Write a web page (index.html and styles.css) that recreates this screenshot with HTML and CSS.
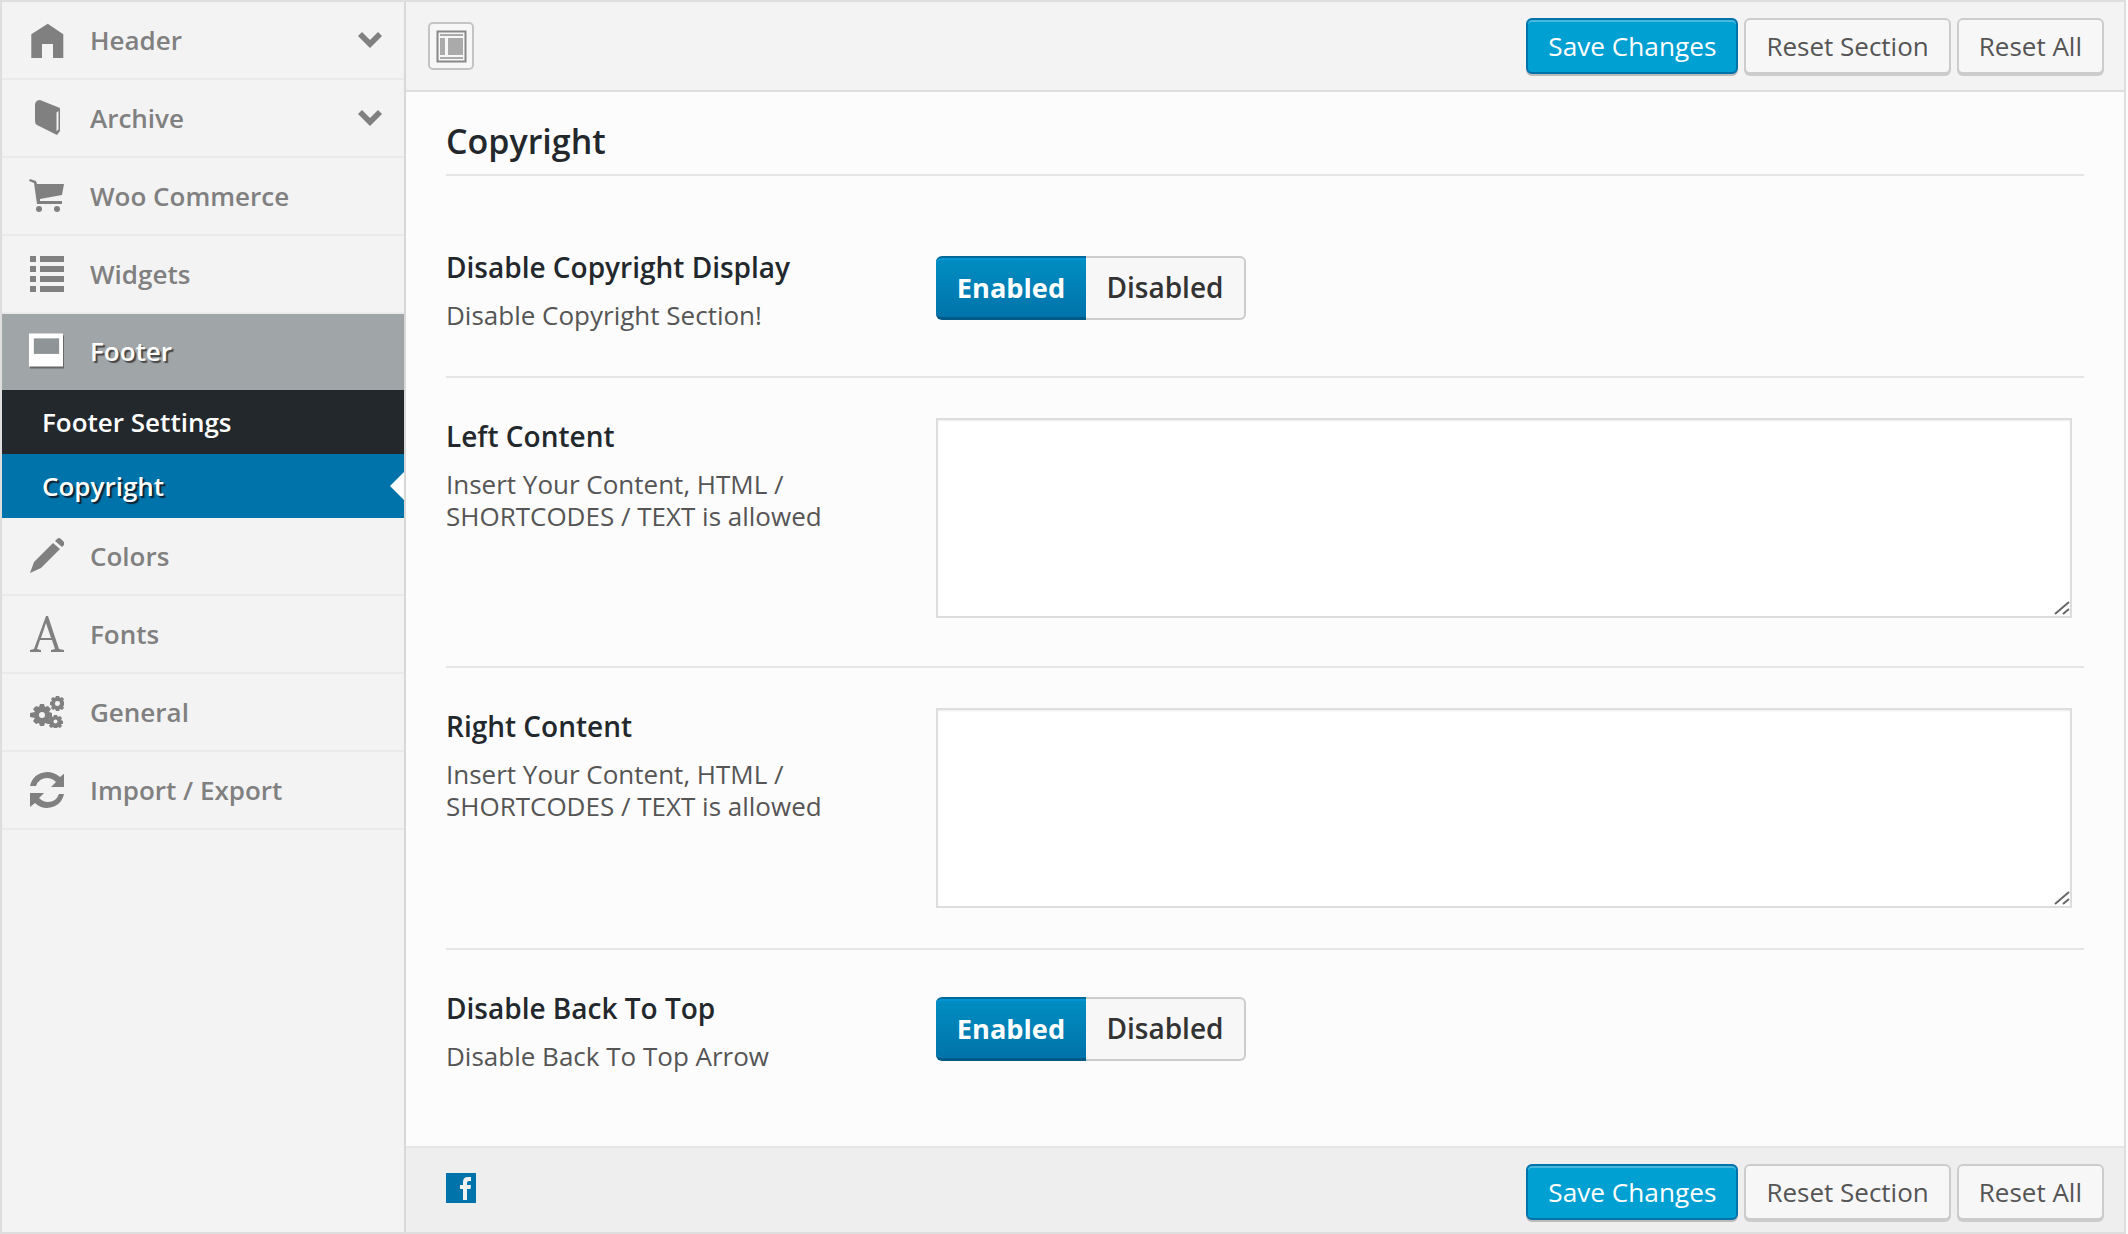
FILE: index.html
```html
<!DOCTYPE html>
<html lang="en">
<head>
  <meta charset="UTF-8">
  <title>Theme Options - Copyright</title>
  <link rel="stylesheet" href="styles.css">
</head>
<body>
  <div class="panel">
    <!-- side menu -->
    <nav class="sidebar">
      <a class="item" href="#">
        <svg class="icon" viewBox="0 0 36 36"><path d="M19.700 1.700 L35.300 12.300 V36 H25 V22 H14 V36 H3.300 V12.300 Z"/></svg>
        <span>Header</span>
        <svg class="chevron" viewBox="0 0 24 16"><path d="M0 4 L4 0 L12 8 L20 0 L24 4 L12 16 Z"/></svg>
      </a>
      <a class="item" href="#">
        <svg class="icon" viewBox="0 0 36 36"><path fill-rule="evenodd" d="M12 0 L32 8 V31 L29 35 L9 25 Q7 24 7 21 V4 Q8 0 12 0 Z M30.500 11 L28.500 12.500 V31 L30.500 29.500 Z"/></svg>
        <span>Archive</span>
        <svg class="chevron" viewBox="0 0 24 16"><path d="M0 4 L4 0 L12 8 L20 0 L24 4 L12 16 Z"/></svg>
      </a>
      <a class="item" href="#">
        <svg class="icon" viewBox="0 0 36 36"><path d="M2 1 L8 3 L9 6 H36 L34 17 L12 21 V23 H34 V26 H9 L6 5 L1 3 Z"/><circle cx="11" cy="31" r="3"/><circle cx="29" cy="31" r="3"/></svg>
        <span>Woo Commerce</span>
      </a>
      <a class="item" href="#">
        <svg class="icon" viewBox="0 0 36 36"><path d="M2 0 H8 V6 H2 Z M12 0 H36 V6 H12 Z M2 10 H8 V16 H2 Z M12 10 H36 V16 H12 Z M2 20 H8 V26 H2 Z M12 20 H36 V26 H12 Z M2 30 H8 V36 H2 Z M12 30 H36 V36 H12 Z"/></svg>
        <span>Widgets</span>
      </a>
      <a class="item item-open" href="#">
        <svg class="icon" viewBox="0 0 37 36"><path class="frame-shadow" d="M2 2 H37 V36 H2 Z"/><path class="frame" d="M1 0 H36 V34 H1 Z"/><path class="frame-hole" d="M6 5 H32 V21 H6 Z"/></svg>
        <span>Footer</span>
      </a>
      <a class="subitem" href="#">Footer Settings</a>
      <a class="subitem subitem-active" href="#">Copyright</a>
      <a class="item" href="#">
        <svg class="icon" viewBox="0 0 36 36"><path d="M29 1 Q31 -1 33 1 L36 4 Q37 6 35 8 L34 9 L27 3 Z M25 5 L32 11 L13 30 L2 35 L6 24 Z"/></svg>
        <span>Colors</span>
      </a>
      <a class="item" href="#">
        <svg class="icon" viewBox="0 0 36 36"><path d="M18 0 H20 L31 33 L36 34 V36 H23 V34 L27 33 L24 24 H12 L9 33 L13 34 V36 H2 V34 L6 33 Z M18 7 L13 22 H23 Z"/></svg>
        <span>Fonts</span>
      </a>
      <a class="item" href="#">
        <svg class="icon" viewBox="0 0 36 32"><path fill-rule="evenodd" d="M12 8 H16 L17 11 L20 10 L23 13 L21 16 L24 17 V21 L21 22 L23 25 L20 28 L17 27 L16 30 H12 L11 27 L8 28 L5 25 L7 22 L2 21 V17 L7 16 L5 13 L8 10 L11 11 Z M14 16 A3 3 0 1 0 14.001 22 A3 3 0 1 0 14 16 Z"/><path fill-rule="evenodd" d="M28 0 H31 L32 2 L34 1 L36 3 L35 5 L37 6 V9 L35 10 L36 12 L34 14 L32 13 L31 15 H28 L27 13 L25 14 L23 12 L24 10 L22 9 V6 L24 5 L23 3 L25 1 L27 2 Z M29.500 5 A2.500 2.500 0 1 0 29.501 10 A2.500 2.500 0 1 0 29.500 5 Z"/><path fill-rule="evenodd" d="M26 19 H29 L30 21 L32 20 L34 22 L33 24 L35 25 V28 L33 28 L34 30 L32 32 L30 31 L29 32 H26 L25 31 L23 32 L21 30 L22 28 L20 28 V25 L22 24 L21 22 L23 20 L25 21 Z M27.500 23.500 A2 2 0 1 0 27.501 27.500 A2 2 0 1 0 27.500 23.500 Z"/></svg>
        <span>General</span>
      </a>
      <a class="item" href="#">
        <svg class="icon" viewBox="0 0 36 36"><path d="M37 1 V15 H23 L28 10 Q24 6 19 6 Q11 6 8 14 H2 Q5 1 19 0 Q26 0 32 5 Z"/><path d="M2 35 V21 H16 L11 26 Q15 30 20 30 Q28 30 31 22 H36 Q33 35 19 36 Q12 36 7 31 Z"/></svg>
        <span>Import / Export</span>
      </a>
    </nav>

    <div class="main">
      <header class="bar bar-top">
        <button class="layout-btn" type="button" aria-label="Toggle layout">
          <svg viewBox="0 0 31 33"><path class="lay-out" d="M1.500 1.500 H29.500 V31.500 H1.500 Z"/><path class="lay-fill" d="M4 4 H27 V6 H4 Z M4 8 H9 V25 H4 Z M12 8 H27 V25 H12 Z M4 27 H27 V29 H4 Z"/></svg>
        </button>
        <div class="actions">
          <button class="btn btn-primary" type="button">Save Changes</button>
          <button class="btn" type="button">Reset Section</button>
          <button class="btn" type="button">Reset All</button>
        </div>
      </header>

      <section class="content">
        <h2 class="title">Copyright</h2>

        <div class="row row-switch">
          <div class="info">
            <h3>Disable Copyright Display</h3>
            <p>Disable Copyright Section!</p>
          </div>
          <div class="switch"><span class="on">Enabled</span><span class="off">Disabled</span></div>
        </div>

        <div class="row row-text">
          <div class="info">
            <h3>Left Content</h3>
            <p>Insert Your Content, HTML / SHORTCODES / TEXT is allowed</p>
          </div>
          <div class="editor-wrap">
            <textarea class="editor"></textarea>
            <svg class="grip" viewBox="0 0 16 14"><path d="M1 13 L15 1 M9 13 L15 8"/></svg>
          </div>
        </div>

        <div class="row row-text">
          <div class="info">
            <h3>Right Content</h3>
            <p>Insert Your Content, HTML / SHORTCODES / TEXT is allowed</p>
          </div>
          <div class="editor-wrap">
            <textarea class="editor"></textarea>
            <svg class="grip" viewBox="0 0 16 14"><path d="M1 13 L15 1 M9 13 L15 8"/></svg>
          </div>
        </div>

        <div class="row row-switch row-last">
          <div class="info">
            <h3>Disable Back To Top</h3>
            <p>Disable Back To Top Arrow</p>
          </div>
          <div class="switch"><span class="on">Enabled</span><span class="off">Disabled</span></div>
        </div>
      </section>

      <footer class="bar bar-bottom">
        <a class="social" href="#" aria-label="Facebook">
          <svg viewBox="0 0 30 30"><path class="fb-bg" d="M0 0 H30 V30 H0 Z"/><path class="fb-f" d="M17 27 V16 H14 V12 H17 V9 Q17 4 22 4 H25 V8 H23 Q21 8 21 10 V12 H25 L24.500 16 H21 V27 Z"/></svg>
        </a>
        <div class="actions">
          <button class="btn btn-primary" type="button">Save Changes</button>
          <button class="btn" type="button">Reset Section</button>
          <button class="btn" type="button">Reset All</button>
        </div>
      </footer>
    </div>
  </div>
</body>
</html>
```

FILE: styles.css
```css
/* reset */
html, body {
  margin: 0;
  padding: 0;
  background-color: #fcfcfc;
  box-sizing: border-box;
  font-family: 'Open Sans', 'Liberation Sans', sans-serif;
}
*, *::before, *::after {
  box-sizing: inherit;
}
/* outer frame */
.panel {
  display: flex;
  width: 2126px;
  height: 1234px;
  border: 2px solid #dedede;
  overflow: hidden;
}
/* side menu */
.sidebar {
  flex: 0 0 404px;
  background-color: #f3f3f3;
  border-right: 2px solid #d8d8d8;
}
.item {
  display: flex;
  align-items: center;
  height: 78px;
  padding: 0 22px 0 26px;
  border-bottom: 2px solid #eaeaea;
  color: #808080;
  font-size: 26px;
  font-weight: 600;
  text-decoration: none;
}
.item span {
  margin-left: 26px;
  flex: 1;
}
.icon {
  width: 36px;
  height: 36px;
  fill: #808080;
  flex: none;
}
.chevron {
  width: 24px;
  height: 16px;
  fill: #808080;
}
.item-open {
  height: 76px;
  padding-bottom: 2px;
  border-bottom: 0;
  background-color: #a0a5a8;
  color: #fff;
  text-shadow: 2px 2px 1px #444;
}
.frame { fill: #fff; }
.frame-shadow { fill: #666; }
.frame-hole { fill: #8f9497; }
.subitem {
  display: flex;
  align-items: center;
  position: relative;
  height: 64px;
  padding: 0 0 1px 40px;
  background-color: #23282d;
  color: #fff;
  font-size: 26px;
  font-weight: 600;
  text-decoration: none;
}
.subitem-active {
  background-color: #0073aa;
  text-shadow: 2px 2px 1px #123;
}
.subitem-active::after {
  content: "";
  position: absolute;
  right: 0;
  top: 18px;
  border: 14px solid transparent;
  border-left-width: 0;
  border-right-color: #fff;
}
/* main column */
.main {
  flex: 1;
  display: flex;
  flex-direction: column;
  min-width: 0;
}
.bar {
  flex: none;
  display: flex;
  align-items: center;
  justify-content: space-between;
  background-color: #f3f3f3;
}
.bar-top {
  height: 90px;
  padding: 0 20px 0 22px;
  border-bottom: 2px solid #dedede;
}
.bar-bottom {
  height: 86px;
  padding: 4px 20px 0 40px;
  background-color: #eee;
  border-top: 2px solid #e6e6e6;
}
.actions {
  display: flex;
  gap: 6px;
}
.btn {
  height: 56px;
  padding: 0 20px;
  border: 2px solid #ccc;
  border-radius: 6px;
  background-color: #f7f7f7;
  box-shadow: 0 2px 0 #ccc;
  color: #555;
  font-family: inherit;
  font-size: 26px;
}
.btn-primary {
  padding: 0 20px;
  border-color: #0073aa;
  background-color: #00a0d2;
  box-shadow: inset 0 2px 0 rgba(120, 200, 230, 0.6), 0 2px 0 #bbb;
  color: #fff;
  font-size: 26.200px;
}
.layout-btn {
  width: 46px;
  height: 48px;
  padding: 0;
  display: flex;
  align-items: center;
  justify-content: center;
  background-color: #f7f7f7;
  border: 2px solid #c4c4c4;
  border-radius: 5px;
}
.layout-btn svg {
  width: 31px;
  height: 33px;
}
.lay-out {
  fill: none;
  stroke: #888;
  stroke-width: 2;
}
.lay-fill { fill: #aaa; }
/* content area */
.content {
  flex: 1;
  min-height: 0;
  padding: 0 40px;
  background-color: #fcfcfc;
}
.title {
  margin: 0;
  height: 84px;
  padding-top: 25px;
  border-bottom: 2px solid #e5e5e5;
  color: #23282d;
  font-size: 34px;
  font-weight: 600;
  line-height: 48px;
}
.row {
  display: flex;
  align-items: flex-start;
  border-bottom: 2px solid #e5e5e5;
}
.row-switch {
  height: 202px;
  padding-top: 73px;
}
.row-switch .switch {
  margin-top: 7px;
}
.row-text {
  height: 290px;
  padding-top: 40px;
}
.row-text + .row-text {
  height: 282px;
}
.row-last {
  height: auto;
  border-bottom: 0;
  padding-top: 40px;
}
.info {
  flex: 0 0 490px;
  padding-right: 60px;
}
.info h3 {
  margin: 0;
  color: #23282d;
  font-size: 28px;
  font-weight: 600;
  line-height: 36px;
}
.info p {
  margin: 14px 0 0;
  color: #555;
  font-size: 26px;
  line-height: 32px;
}
.switch {
  display: flex;
  height: 64px;
  font-size: 28px;
  font-weight: 600;
  line-height: 59px;
}
.switch .on {
  width: 150px;
  text-align: center;
  color: #fff;
  border-radius: 6px 0 0 6px;
  border-top: 2px solid #006799;
  border-bottom: 3px solid #005a87;
  background: linear-gradient(#008ec2, #0073aa);
  box-shadow: inset 0 2px 0 #0096d6;
  font-size: 27.200px;
  font-weight: 700;
}
.switch .off {
  width: 160px;
  text-align: center;
  color: #333;
  border: 2px solid #ccc;
  border-left: 0;
  border-radius: 0 6px 6px 0;
  background-color: #f7f7f7;
}
.editor-wrap {
  position: relative;
  width: 1136px;
  height: 200px;
}
.editor {
  display: block;
  width: 100%;
  height: 100%;
  margin: 0;
  border: 2px solid #ddd;
  background-color: #fff;
  box-shadow: inset 0 1px 2px rgba(0, 0, 0, 0.07);
  outline: 0;
  resize: none;
}
.grip {
  position: absolute;
  right: 2px;
  bottom: 3px;
  width: 16px;
  height: 14px;
  fill: none;
  stroke: #666;
  stroke-width: 2;
}
.social {
  display: block;
  width: 30px;
  height: 30px;
  margin-bottom: 8px;
}
.social svg {
  display: block;
  width: 30px;
  height: 30px;
}
.fb-bg { fill: #0073aa; }
.fb-f { fill: #f1f1f1; }
```
